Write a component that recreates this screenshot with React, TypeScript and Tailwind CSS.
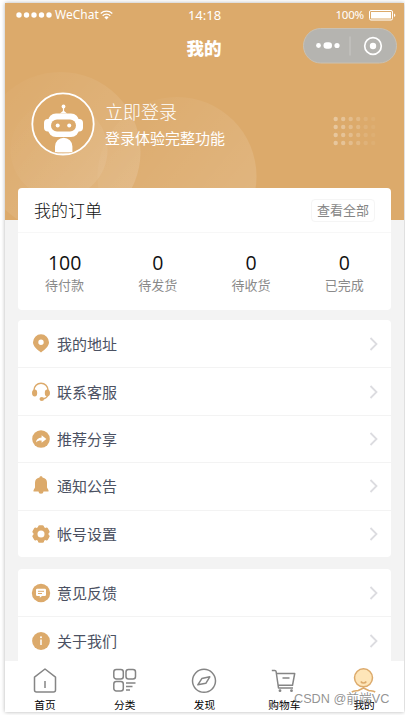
import type { ReactNode } from "react";

const GOLD = "#dcaa6b";

const orders = [
    { count: 100, label: "待付款" },
    { count: 0, label: "待发货" },
    { count: 0, label: "待收货" },
    { count: 0, label: "已完成" },
];

function PinIcon() {
    return (
        <svg width="18" height="20" viewBox="0 0 18 20">
            <path fillRule="evenodd" fill={GOLD} d="M9 .3a8 8 0 0 0-8 8c0 4 4 7.200 8 10.200 4-3 8-6.200 8-10.200a8 8 0 0 0-8-8zm0 5.300a2.700 2.700 0 1 1 0 5.400 2.700 2.700 0 0 1 0-5.400z" />
        </svg>
    );
}

function HeadsetIcon() {
    return (
        <svg width="18" height="20" viewBox="0 0 18 20" fill="none" stroke={GOLD} className="overflow-visible">
            <path d="M2 9.500V8.200a7 7 0 0 1 14 0v1.300" strokeWidth="1.500" />
            <path d="M15.800 13c-.6 2.200-2.500 3.700-5.300 3.900" strokeWidth="1.300" />
            <path d="M2.800 7.600c1.500 0 2.400 1 2.400 3.500s-.9 3.500-2.400 3.500C1 14.600 0 13.200 0 11.100s1-3.500 2.800-3.500zM15.200 7.600c-1.500 0-2.400 1-2.400 3.500s.9 3.500 2.400 3.500c1.800 0 2.800-1.400 2.800-3.500s-1-3.500-2.800-3.500z" fill={GOLD} stroke="none" />
            <ellipse cx="9.800" cy="16.900" rx="2.300" ry="2" fill={GOLD} stroke="none" />
        </svg>
    );
}

function ShareIcon() {
    return (
        <svg width="18" height="20" viewBox="0 0 18 20">
            <circle cx="9" cy="10" r="8.800" fill={GOLD} />
            <path d="M9.600 6.300 14.400 10l-4.800 3.700v-2.200c-2.300-.2-4 .3-5.700 1.900.4-3 2.300-4.800 5.700-5z" fill="#fff" />
        </svg>
    );
}

function BellIcon() {
    return (
        <svg width="18" height="20" viewBox="0 0 18 20" fill={GOLD}>
            <path d="M9 .3c-.9 0-1.400.5-1.500 1.200C4.500 2.100 3 4.100 3 6.700v4.800l-1.500 2.700v1.300h15v-1.300L15 11.500V6.700c0-2.600-1.500-4.600-4.500-5.200C10.400.8 9.900.3 9 .3zM6.500 15.400a2.500 2.300 0 0 0 5 0z" />
        </svg>
    );
}

function GearIcon() {
    return (
        <svg width="18" height="20" viewBox="0 0 18 20">
            <g fill={GOLD}>
                <circle cx="9" cy="10" r="7.600" />
                <rect x="6" y="1.200" width="6" height="17.600" rx="1.500" />
                <rect x="6" y="1.200" width="6" height="17.600" rx="1.500" transform="rotate(60 9 10)" />
                <rect x="6" y="1.200" width="6" height="17.600" rx="1.500" transform="rotate(120 9 10)" />
            </g>
            <circle cx="9" cy="10" r="3.500" fill="#fff" />
        </svg>
    );
}

function FeedbackIcon() {
    return (
        <svg width="18" height="20" viewBox="0 0 18 20" className="overflow-visible">
            <circle cx="9" cy="10" r="9.200" fill={GOLD} />
            <path d="M5.200 5.700h7.600a1.200 1.200 0 0 1 1.200 1.200v4.800a1.200 1.200 0 0 1-1.200 1.200H10l-2.200 1.900v-1.900H5.200A1.200 1.200 0 0 1 4 11.700V6.900a1.200 1.200 0 0 1 1.200-1.200z" fill="#fff" />
            <path d="M6 8.300h6M6 10.500h4" stroke={GOLD} />
        </svg>
    );
}

function InfoIcon() {
    return (
        <svg width="18" height="20" viewBox="0 0 18 20">
            <circle cx="9" cy="10" r="8.900" fill={GOLD} />
            <circle cx="9" cy="6.300" r="1" fill="#fff" />
            <path d="M9 8.500v5.500" stroke="#fff" strokeWidth="1.500" />
        </svg>
    );
}

type MenuItem = { label: string; icon: ReactNode };

const mainMenu: MenuItem[] = [
    { label: "我的地址", icon: <PinIcon /> },
    { label: "联系客服", icon: <HeadsetIcon /> },
    { label: "推荐分享", icon: <ShareIcon /> },
    { label: "通知公告", icon: <BellIcon /> },
    { label: "帐号设置", icon: <GearIcon /> },
];

const moreMenu: MenuItem[] = [
    { label: "意见反馈", icon: <FeedbackIcon /> },
    { label: "关于我们", icon: <InfoIcon /> },
];

function MenuCard({ items }: { items: MenuItem[] }) {
    return (
        <div className="rounded-[4px] bg-white overflow-hidden">
            {items.map((item, i) => (
                <div
                    key={item.label}
                    className={`h-[47.400px] flex items-center pl-[14px] pr-[12px] ${i > 0 ? "border-t border-[#f3f3f3]" : ""}`}
                >
                    {item.icon}
                    <span className="ml-[7px] flex-1 text-[15px] leading-5 text-[#4b5162]">{item.label}</span>
                    <svg width="10" height="14" viewBox="0 0 10 14" fill="none" stroke="#dcdce0" strokeWidth="1.800">
                        <path d="m1.500 1 6 6-6 6" />
                    </svg>
                </div>
            ))}
        </div>
    );
}

function StatusBar() {
    return (
        <div className="h-[24px] grid grid-cols-3 items-center pl-[11px] pr-[8px] text-white text-[12px] leading-4">
            <div className="flex items-center">
                <svg width="37" height="6" viewBox="0 0 37 6" fill="#fff">
                    <circle cx="3" cy="3" r="2.700" />
                    <circle cx="10.500" cy="3" r="2.700" />
                    <circle cx="18" cy="3" r="2.700" />
                    <circle cx="25.500" cy="3" r="2.700" />
                    <circle cx="33" cy="3" r="2.700" />
                </svg>
                <span className="ml-[2px] w-[45px] whitespace-nowrap">WeChat</span>
                <svg width="13" height="10" viewBox="0 0 13 10" fill="none" stroke="#fff" strokeWidth="1.300">
                    <path d="M.7 3.500a8.500 8.500 0 0 1 11.600 0M2.700 5.700a5.500 5.500 0 0 1 7.600 0" />
                    <path d="M4.300 7.300a3.300 3.300 0 0 1 4.400 0L6.500 9.600z" fill="#fff" stroke="none" />
                </svg>
            </div>
            <span className="text-center text-[13px] -ml-[3px]">14:18</span>
            <div className="flex items-center justify-end gap-[5px]">
                <span className="text-[11.500px] tracking-[-0.200px]">100%</span>
                <svg width="27" height="11" viewBox="0 0 27 11">
                    <rect x=".5" y=".5" width="23" height="9.500" rx="1.500" fill="none" stroke="#fff" />
                    <rect x="2" y="2" width="20" height="6.500" fill="#fff" />
                    <path d="M25 3.500c1.800.5 1.800 3 0 3.500z" fill="#fff" />
                </svg>
            </div>
        </div>
    );
}

function NavBar() {
    return (
        <div className="h-[40px] grid grid-cols-[1fr_auto_1fr] items-center">
            <span />
            <h1 className="text-[17.500px] leading-6 font-black text-white mt-px -ml-px">我的</h1>
            <svg className="justify-self-end mb-[3px] mr-[7px]" width="94" height="36" viewBox="0 0 94 36">
                <rect x=".5" y=".5" width="93" height="34.500" rx="17.200" fill="#b5b4b0" stroke="#c9c1b3" />
                <path d="M47 8.500v19" stroke="#c9c8c5" />
                <g fill="#fff">
                    <circle cx="15.500" cy="17.500" r="2.400" />
                    <rect x="20.500" y="14.300" width="8.500" height="6.400" rx="3.200" />
                    <circle cx="34" cy="17.500" r="2.600" />
                    <circle cx="70" cy="18" r="3.200" />
                </g>
                <circle cx="70" cy="18" r="8.300" fill="none" stroke="#fff" strokeWidth="1.700" />
            </svg>
        </div>
    );
}

const dotOpacity = [0.34, 0.3, 0.23, 0.18, 0.1, 0.06];

function HeaderBackdrop() {
    return (
        <svg className="absolute inset-0" width="399" height="217" viewBox="0 0 399 217">
            <defs>
                <linearGradient id="disc" x1="0.150" y1="0.100" x2="0.950" y2="0.750">
                    <stop offset="0" stopColor="#fff" stopOpacity="0.020" />
                    <stop offset="1" stopColor="#fff" stopOpacity="0.140" />
                </linearGradient>
                <linearGradient id="innerDisc" x1="0.150" y1="0.100" x2="0.950" y2="0.750">
                    <stop offset="0" stopColor="#fff" stopOpacity="0.010" />
                    <stop offset="1" stopColor="#fff" stopOpacity="0.080" />
                </linearGradient>
            </defs>
            <circle cx="55.500" cy="149" r="80" fill="url(#disc)" />
            <circle cx="54" cy="147" r="48.500" fill="url(#innerDisc)" />
            <circle cx="172" cy="173.500" r="79.500" fill="url(#disc)" />
            {dotOpacity.map((opacity, col) =>
                [0, 1, 2, 3].map((row) => (
                    <circle key={`${col}-${row}`} cx={330.700 + col * 7.500} cy={116 + row * 8} r="2.200" fill="#fff" opacity={opacity} />
                ))
            )}
        </svg>
    );
}

function Avatar() {
    return (
        <svg width="64" height="64" viewBox="0 0 64 64">
            <circle cx="32" cy="32" r="30.700" fill={GOLD} stroke="#fff" strokeWidth="1.800" />
            <g fill="#fff">
                <circle cx="32.500" cy="14.500" r="1.900" />
                <path d="M31.900 15h1.200v4l3 2.500h-7.200l3-2.500z" />
                <rect x="17" y="21.500" width="31" height="23.500" rx="8" />
                <rect x="13" y="27" width="39" height="12.500" rx="4" />
                <path d="M24 60v-5.500a8.700 8.700 0 0 1 17.400 0V60c-5 2-12 2-17.400 0z" />
            </g>
            <rect x="20" y="27.500" width="25" height="12" rx="6" fill={GOLD} />
            <circle cx="26.700" cy="33.500" r="2" fill="#fff" />
            <circle cx="38.200" cy="33.500" r="2" fill="#fff" />
            <path d="M25 60.500h15.500" stroke={GOLD} strokeWidth=".6" />
        </svg>
    );
}

function OrderCard() {
    return (
        <div className="h-[122px] shrink-0 rounded-[4px] bg-white">
            <div className="h-[45px] flex items-center justify-between px-4 border-b border-[#f7f7f7]">
                <h2 className="text-[17px] leading-6 pt-px text-[#111] font-light">我的订单</h2>
                <button className="h-[23px] px-[5px] rounded-[4px] border border-[#f5f5f5] text-[13px] leading-5 text-[#858585]">查看全部</button>
            </div>
            <div className="grid grid-cols-4 pt-[17px]">
                {orders.map((order) => (
                    <div key={order.label} className="flex flex-col items-center">
                        <span className="font-['Open_Sans',sans-serif] text-[19.500px] leading-[25px] text-[#111]">{order.count}</span>
                        <span className="text-[13px] leading-5 text-[#8a8a8a]">{order.label}</span>
                    </div>
                ))}
            </div>
        </div>
    );
}

const tabs: MenuItem[] = [
    {
        label: "首页",
        icon: <path d="M2.500 9.200 13 1l10.500 8.200V22a2 2 0 0 1-2 2h-17a2 2 0 0 1-2-2zM13 13v7" />,
    },
    {
        label: "分类",
        icon: (
            <>
                <rect x="1.800" y="1.500" width="9.500" height="9.500" rx="2.500" />
                <rect x="14" y="1.500" width="9.500" height="9.500" rx="2.500" />
                <rect x="1.800" y="13.500" width="9.500" height="9.500" rx="2.500" />
                <path d="M14 15h9.500M14 18.500h6.500M14 22h4" />
            </>
        ),
    },
    {
        label: "发现",
        icon: (
            <>
                <circle cx="13" cy="12.800" r="11.500" />
                <path d="m18.800 8.800-8 1.800-4 6.200 8-1.500z" />
            </>
        ),
    },
    {
        label: "购物车",
        icon: (
            <>
                <path d="M.8 2.500h3c.8 0 1.200.4 1.300 1L7.500 20H22M5.500 5.500h18.200l-2.200 11.800H7.200M11.500 10h7" />
                <circle cx="9" cy="22.700" r="1.400" fill="#858585" stroke="none" />
                <circle cx="20.500" cy="22.700" r="1.400" fill="#858585" stroke="none" />
            </>
        ),
    },
    {
        label: "我的",
        icon: (
            <>
                <circle cx="12.500" cy="9.800" r="9" fill="#fee5b8" stroke={GOLD} />
                <path d="M9.800 13.500c1.300 2 4.200 2 5.500 0M12.500 19v1.500M.8 24c2-1.300 4.500-1 6.500-1.500l5.200-2.500 5.200 2.500c2 .5 4.500.2 6.500 1.500" stroke={GOLD} />
            </>
        ),
    },
];

function TabBar() {
    return (
        <nav className="relative h-[51px] shrink-0 bg-white grid grid-cols-5 pt-[7px]">
            {tabs.map((tab) => (
                <div key={tab.label} className="flex flex-col items-center">
                    <svg width="26" height="26" viewBox="0 0 26 26" fill="none" stroke="#858585" strokeWidth="1.500" strokeLinejoin="round">
                        {tab.icon}
                    </svg>
                    <span className="text-[10.700px] leading-[14px] mt-[4px] text-black whitespace-nowrap">{tab.label}</span>
                </div>
            ))}
            <span className="absolute left-[289px] top-[30px] text-[12.700px] leading-4 whitespace-nowrap font-['Liberation_Sans','Noto_Sans_CJK_SC',sans-serif] text-[#777]/80">
                CSDN @前端VC
            </span>
        </nav>
    );
}

export default function App() {
    return (
        <div className="h-[715px] w-[405px] overflow-hidden bg-white pt-[3px] pl-[5px] font-['Noto_Sans','Noto_Sans_CJK_SC',sans-serif] font-normal">
            <div className="w-[399px] h-[709px] flex flex-col bg-[#f3f3f3] overflow-hidden shadow-[0_0_4px_rgba(0,0,0,0.3)]">
                <header className="relative h-[217px] shrink-0 bg-[#dcaa6b]">
                    <HeaderBackdrop />
                    <div className="relative">
                        <StatusBar />
                        <NavBar />
                        <div className="flex items-center pl-[26px] mt-[25px] text-white">
                            <Avatar />
                            <div className="ml-[10px]">
                                <div className="text-[18px] leading-7 font-light">立即登录</div>
                                <div className="text-[15px] leading-6">登录体验完整功能</div>
                            </div>
                        </div>
                    </div>
                </header>
                <main className="relative flex-1 min-h-0 -mt-[32px] px-[13px]">
                    <div className="h-full flex flex-col overflow-hidden">
                        <OrderCard />
                        <div className="mt-[10px] shrink-0">
                            <MenuCard items={mainMenu} />
                        </div>
                        <div className="mt-[12px] shrink-0">
                            <MenuCard items={moreMenu} />
                        </div>
                    </div>
                </main>
                <TabBar />
            </div>
        </div>
    );
}
